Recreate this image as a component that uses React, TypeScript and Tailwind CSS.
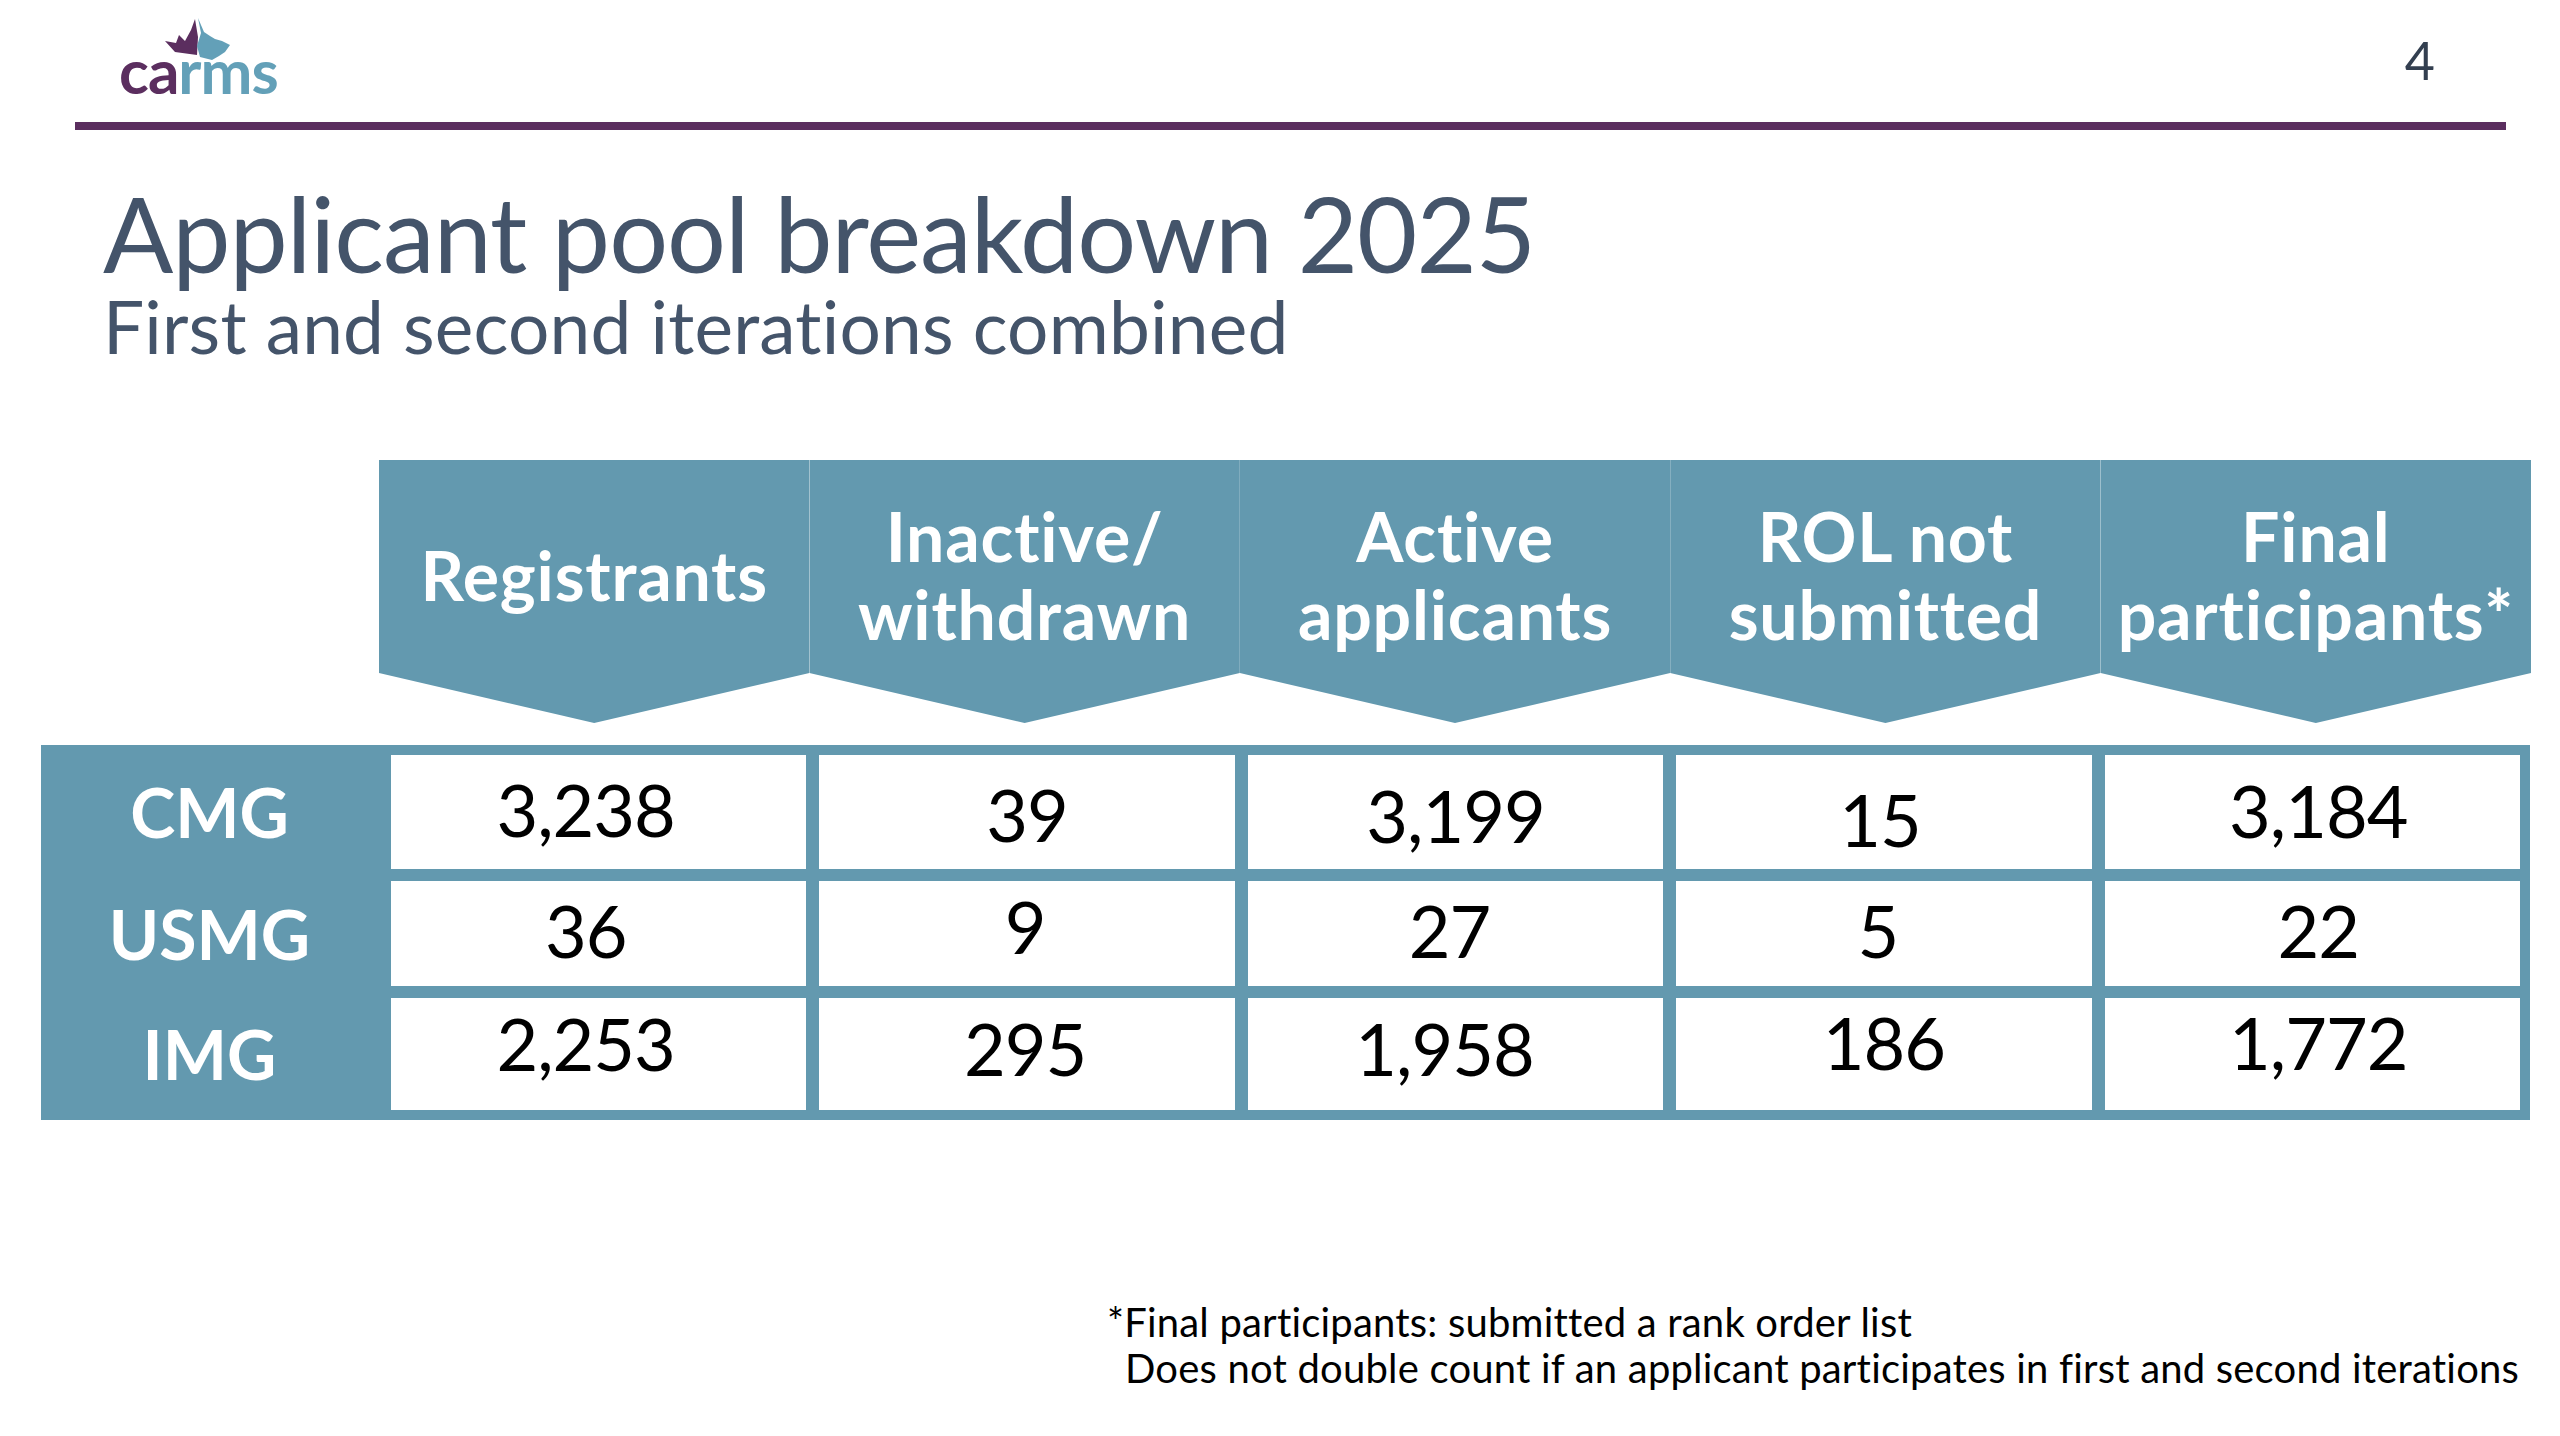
const font = { fontFamily: "Lato, 'Open Sans', sans-serif" };

const headers = [
  ["Registrants"],
  ["Inactive/", "withdrawn"],
  ["Active", "applicants"],
  ["ROL not", "submitted"],
  ["Final", "participants*"],
];

// value, then small [dx, dy] nudges so each figure sits where the slide has it
const rows: [string, [string, number, number][]][] = [
  [
    "CMG",
    [
      ["3,238", -13, -3],
      ["39", 0, 2],
      ["3,199", 0, 3],
      ["15", -4, 7],
      ["3,184", 6, -2],
    ],
  ],
  [
    "USMG",
    [
      ["36", -13, -4],
      ["9", -2, -8],
      ["27", -6, -4],
      ["5", -6, -4],
      ["22", 6, -4],
    ],
  ],
  [
    "IMG",
    [
      ["2,253", -13, -11],
      ["295", -2, -6],
      ["1,958", -11, -6],
      ["186", 0, -12],
      ["1,772", 6, -12],
    ],
  ],
];

function Logo() {
  return (
    <div className="flex flex-col">
      <svg width="72" height="50" viewBox="160 15 72 50" className="ml-[41px] mt-[12px] -mb-[20px]">
        <polygon
          points="165,42 176,44 179,36 185,42 191,31 195,20 198,38 197,56 175,53"
          fill="#5B2E5F"
        />
        <polygon
          points="198,19 204,33 210,37 215,40 222,42 230,46 225,53 219,57 212,61 200,58 197,47 201,34"
          fill="#63A0B8"
        />
      </svg>
      <div className="text-[62px] leading-[52px] font-bold tracking-[-1px]">
        <span className="text-[#5B2E5F]">ca</span>
        <span className="text-[#63A0B8]">rms</span>
      </div>
    </div>
  );
}

export default function App() {
  return (
    <div className="w-[2560px] h-[1436px] bg-white overflow-hidden flex flex-col" style={font}>
      <div className="flex items-start justify-between pl-[119px] pr-[125px] pt-[2px] h-[122px]">
        <Logo />
        <div className="text-[52px] leading-none text-[#333F50] mt-[32px]">4</div>
      </div>
      <div className="ml-[75px] mr-[54px] h-[8px] bg-[#5B2E5F]" />

      <div className="ml-[103px] mt-[51px] text-[104px] leading-none text-[#44546A] tracking-[-1px]">
        Applicant pool breakdown 2025
      </div>
      <div className="ml-[103px] mt-[11px] text-[73px] leading-[60px] text-[#44546A] tracking-[0.2px]">
        First and second iterations combined
      </div>

      <div className="ml-[379px] mt-[104px] w-[2152px] h-[263px] flex">
        {headers.map((lines, i) => (
          <div
            key={i}
            className="flex-1 h-full bg-[#6399AF] [clip-path:polygon(0_0,100%_0,100%_81%,50%_100%,0_81%)]"
          >
            <div className="h-[230px] flex flex-col items-center justify-center text-white font-bold text-[68px] leading-[78px] tracking-[0.8px] text-center">
              {lines.map((l) => (
                <div key={l}>{l}</div>
              ))}
            </div>
          </div>
        ))}
      </div>

      <div className="ml-[41px] mt-[22px] w-[2489px] bg-[#6399AF] pt-[10px] pb-[10px] pr-[10px] grid grid-cols-[337px_repeat(5,1fr)] grid-rows-[114px_105px_112px] gap-x-[13px] gap-y-[12px]">
        {rows.map(([label, vals]) => (
          <>
            <div key={label} className="flex items-center justify-center text-white font-bold text-[68px]">
              {label}
            </div>
            {vals.map(([v, dx, dy], j) => (
              <div
                key={label + j}
                className="bg-white flex items-center justify-center text-black text-[72px] tracking-[-1px]"
              >
                <span style={{ marginLeft: dx * 2, marginTop: dy * 2 }}>{v}</span>
              </div>
            ))}
          </>
        ))}
      </div>

      <div className="ml-[1107px] mt-[179px] text-[40px] leading-[46px] text-black tracking-[0.2px]">
        <div>*Final participants: submitted a rank order list</div>
        <div className="pl-[18px]">
          Does not double count if an applicant participates in first and second iterations
        </div>
      </div>
    </div>
  );
}
